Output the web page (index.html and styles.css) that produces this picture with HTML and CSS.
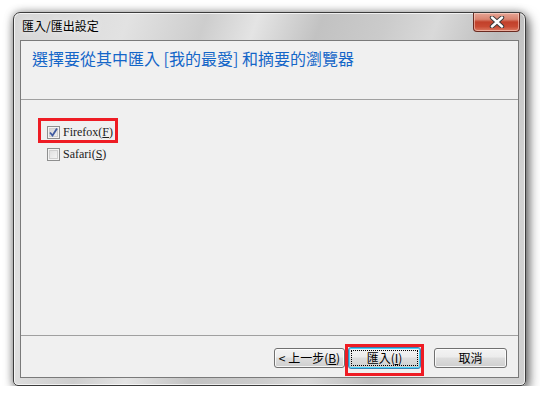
FILE: index.html
```html
<!DOCTYPE html>
<html>
<head>
<meta charset="utf-8">
<title>匯入/匯出設定</title>
<link rel="stylesheet" href="styles.css">
</head>
<body>
<div class="window">
	<div class="titlebar">
		<span class="caption">匯入/匯出設定</span>
		<a class="close" href="javascript:void(0);">
			<svg width="20" height="12" viewBox="0 0 20 12">
				<path d="M5 1.5 L15 10.5 M15 1.5 L5 10.5" stroke="#3a3a3a" stroke-width="4.4" stroke-linecap="round"/>
				<path d="M5 1.5 L15 10.5 M15 1.5 L5 10.5" stroke="#ffffff" stroke-width="2.4" stroke-linecap="round"/>
			</svg>
		</a>
	</div>
	<div class="panel">
		<div class="head">選擇要從其中匯入 [我的最愛] 和摘要的瀏覽器</div>
		<div class="body">
			<div class="mark">
				<label class="opt"><span class="box checked"><svg width="11" height="11" viewBox="0 0 11 11"><path d="M2 5.5 L4.5 8.5 L9 1.5" fill="none" stroke="#3f5aa0" stroke-width="1.8"/></svg></span>Firefox(<u>F</u>)</label>
			</div>
			<label class="opt plain"><span class="box"></span>Safari(<u>S</u>)</label>
		</div>
		<div class="foot">
			<button class="btn back">&lt; 上一步(<u>B</u>)</button>
			<div class="markbtn">
				<button class="btn default"><span class="focus">匯入(<u>I</u>)</span></button>
			</div>
			<button class="btn cancel">取消</button>
		</div>
	</div>
</div>
</body>
</html>
```

FILE: styles.css
```css
* {
	box-sizing: border-box;
}
body {
	margin: 0;
	background-color: #fff;
	font-family: "Noto Sans CJK TC", "Noto Sans", sans-serif;
	font-size: 12px;
}
.window {
	margin: 12px 0 0 13px;
	width: 513px;
	height: 374px;
	border: 1px solid #3c3c3c;
	border-radius: 7px 7px 5px 5px;
	padding: 0 6px 7px 6px;
	display: flex;
	flex-direction: column;
	background: linear-gradient(110deg, #d6d6d6 0%, #e2e2e2 18%, #cdcdcd 30%, #e4e4e4 38%, #c2c2c2 48%, #cbcbcb 58%, #d9d9d9 66%, #bdbdbd 76%, #d3d3d3 88%, #cfcfcf 100%);
	box-shadow: 0 0 8px rgba(0,0,0,0.35), 3px 5px 12px rgba(0,0,0,0.55), inset 0 0 0 1px rgba(255,255,255,0.7);
}
.titlebar {
	height: 27px;
	display: flex;
	align-items: flex-start;
	justify-content: space-between;
}
.caption {
	padding: 5px 0 0 2px;
	line-height: 16px;
	color: #000;
	text-shadow: 0 0 6px rgba(255,255,255,0.9);
}
.close {
	width: 47px;
	height: 19px;
	margin-right: -1px;
	border: 1px solid #6a2a20;
	border-top: none;
	border-radius: 0 0 4px 4px;
	background: linear-gradient(#e6a595 0%, #d98470 35%, #c2402a 50%, #c94a33 75%, #dc7a62 100%);
	box-shadow: inset 0 0 0 1px rgba(255,230,220,0.5);
	display: flex;
	align-items: center;
	justify-content: center;
}
.panel {
	flex: 1;
	border: 1px solid #7a7a7a;
	background-color: #f0f0f0;
	display: flex;
	flex-direction: column;
}
.head {
	height: 59px;
	padding: 6px 0 0 11px;
	font-size: 16px;
	line-height: 22px;
	color: #1466c8;
	border-bottom: 1px solid #a0a0a0;
}
.body {
	flex: 1;
	padding: 18px 0 0 17px;
}
.mark {
	display: inline-block;
	border: 3px solid #ee1c24;
	width: 80px;
	height: 25px;
	padding: 5px 0 0 6px;
}
.opt {
	display: flex;
	align-items: center;
	font-family: "Liberation Serif", "Noto Sans CJK TC", serif;
	font-size: 12px;
	line-height: 13px;
	color: #222;
}
.opt u {
	text-decoration-thickness: 1px;
	text-underline-offset: 1px;
}
.plain {
	padding: 5px 0 0 9px;
}
.box {
	width: 13px;
	height: 13px;
	margin-right: 3px;
	border: 1px solid #8e8f8f;
	background: linear-gradient(135deg, #dcdcdc, #f8f8f8);
	box-shadow: inset 0 0 0 1px #f4f4f4, inset 0 0 0 2px #cfcfcf;
	display: flex;
	align-items: center;
	justify-content: center;
}
.checked {
	background: linear-gradient(135deg, #d0d0d0, #f4f4f4);
}
.foot {
	height: 42px;
	border-top: 1px solid #a0a0a0;
	padding: 8px 11px 0 0;
	display: flex;
	justify-content: flex-end;
	align-items: flex-start;
}
.btn {
	width: 73px;
	height: 20px;
	padding: 0;
	border: 1px solid #707070;
	border-radius: 3px;
	background: linear-gradient(#f3f3f3 0%, #ececec 45%, #dddddd 50%, #cfcfcf 100%);
	box-shadow: inset 0 0 0 1px rgba(255,255,255,0.8);
	font-family: "Noto Sans CJK TC", "Noto Sans", sans-serif;
	font-size: 12px;
	line-height: 16px;
	color: #000;
}
.back {
	width: 71px;
	margin: 4px 0 0 0;
}
.cancel {
	margin: 4px 0 0 10px;
}
.markbtn {
	border: 3px solid #ee1c24;
	padding: 0 0 4px 0;
}
.default {
	height: 22px;
	border-color: #3c7fb1;
	box-shadow: inset 0 0 0 1px #48d2fb;
	padding: 2px;
}
.focus {
	display: block;
	height: 16px;
	border: 1px dotted #000;
	line-height: 14px;
}
```
